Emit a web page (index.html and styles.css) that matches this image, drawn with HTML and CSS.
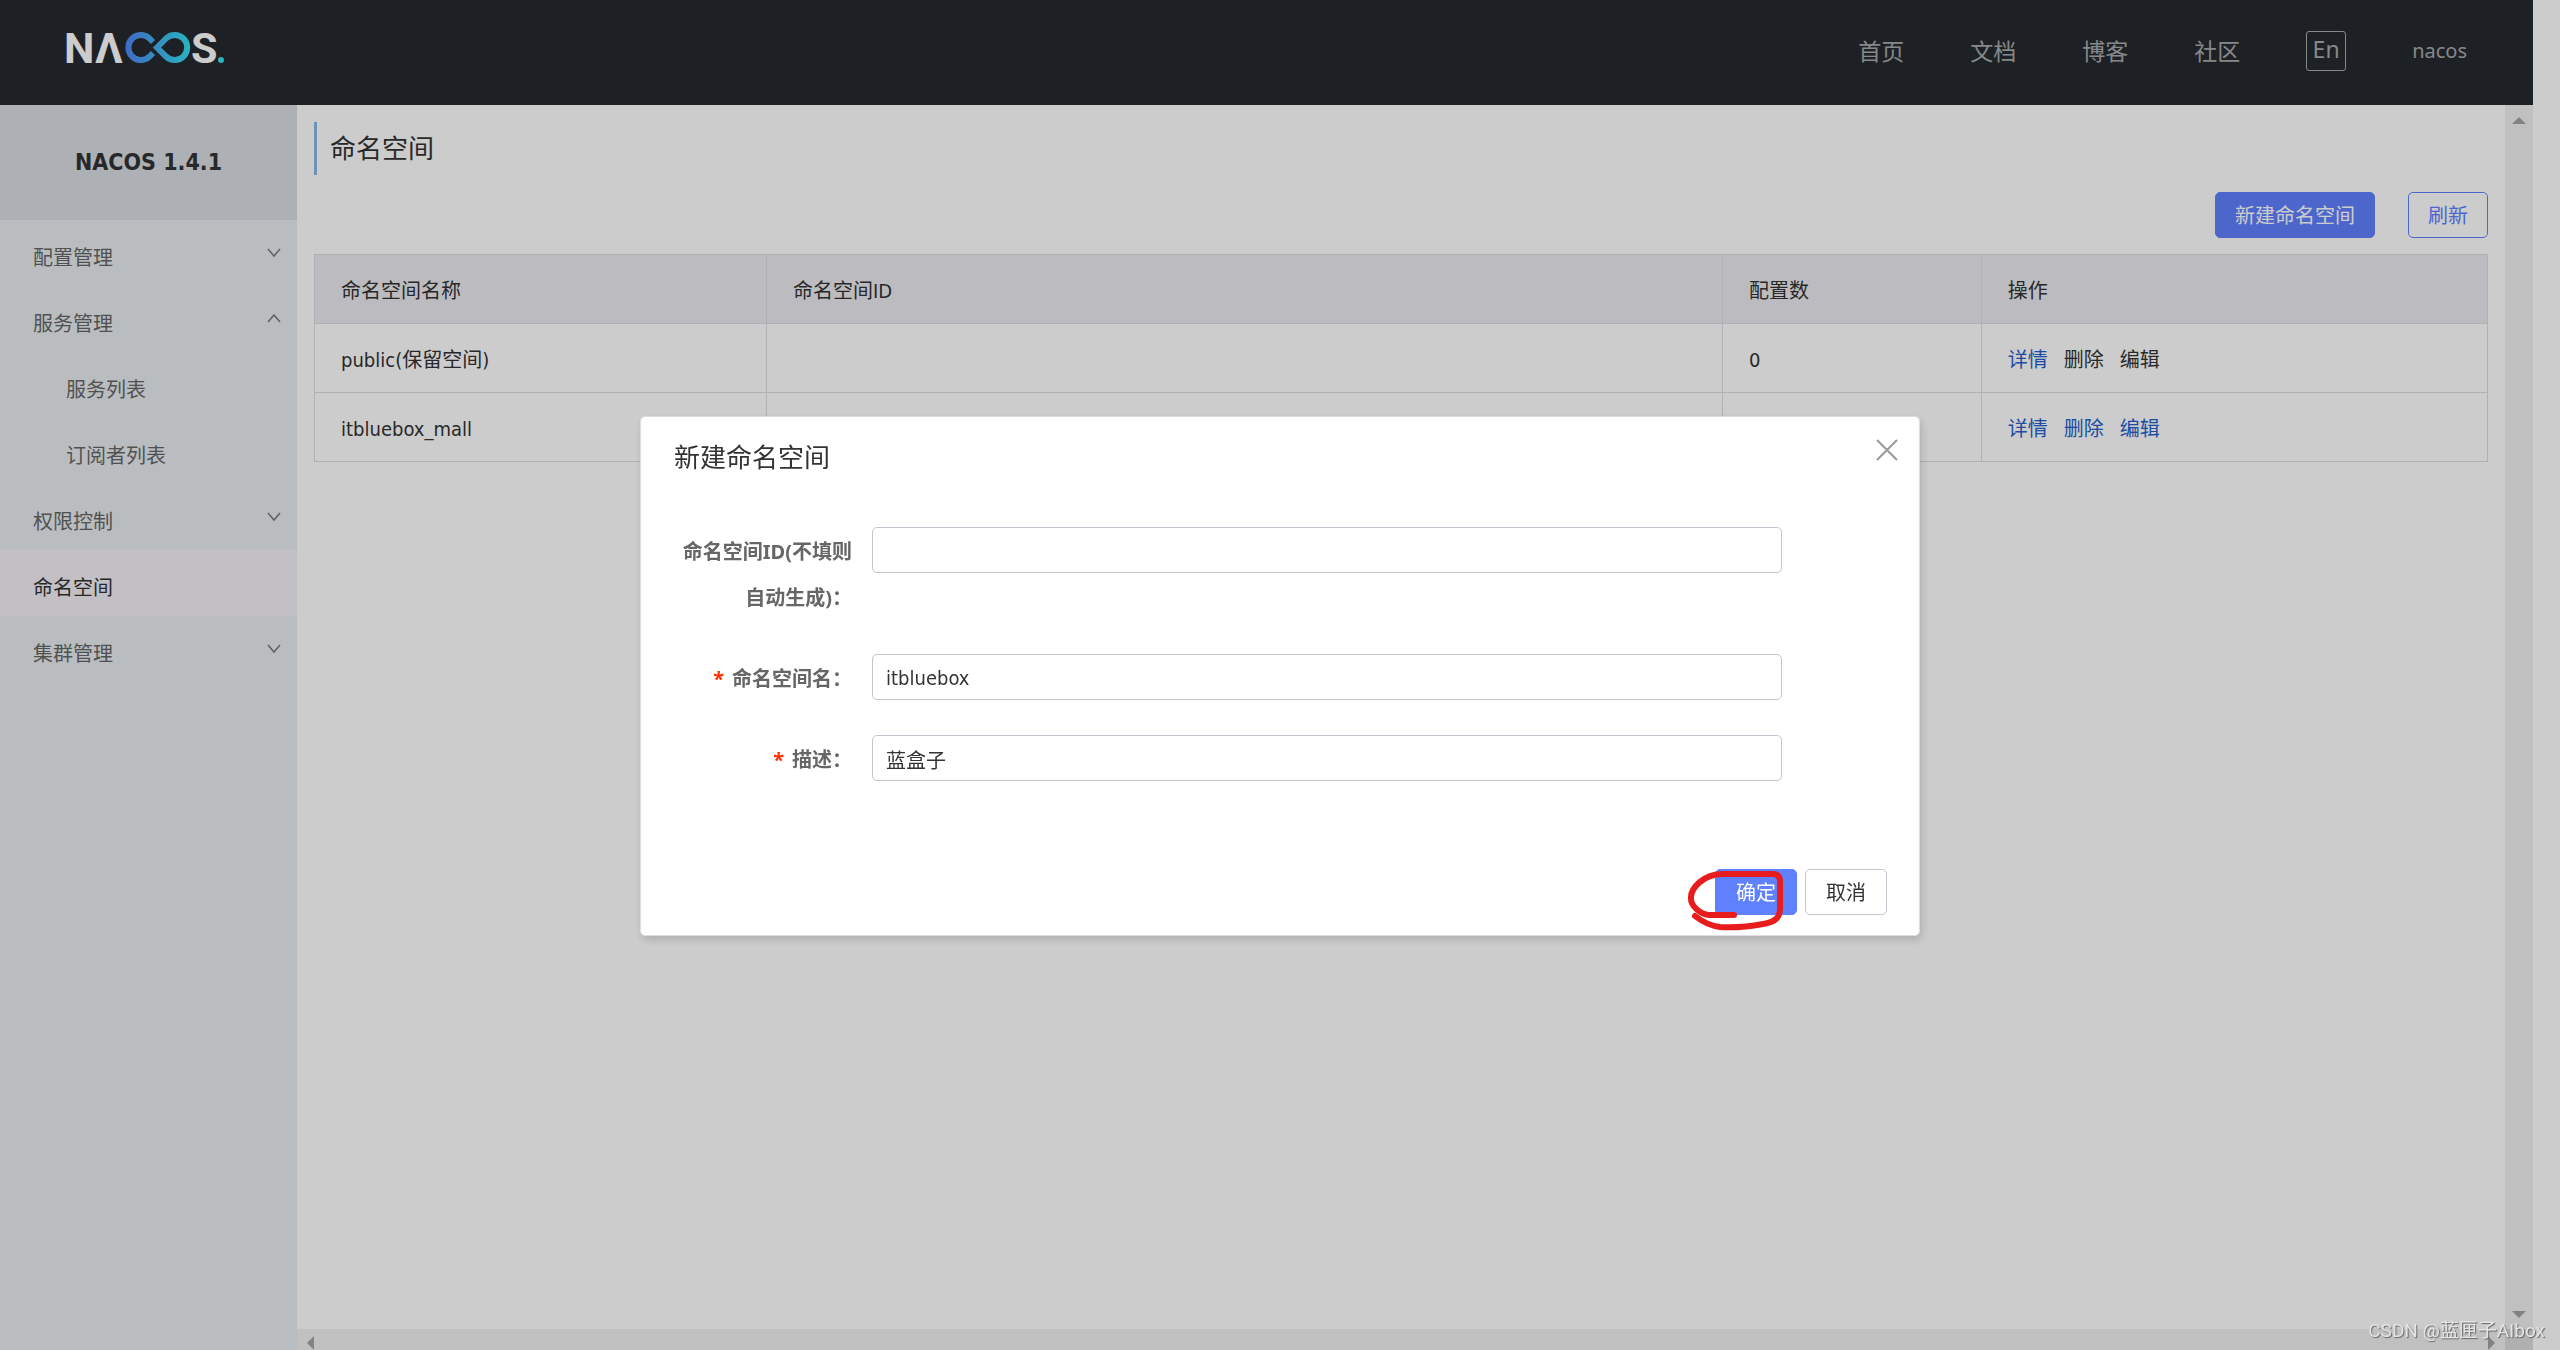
FILE: index.html
```html
<!DOCTYPE html>
<html lang="zh-CN">
<head>
<meta charset="utf-8">
<title>Nacos</title>
<link rel="stylesheet" href="styles.css">
</head>
<body>
<div class="app">
  <header class="topbar">
    <a class="logo" href="#" aria-label="Nacos">
      <svg width="170" height="68" viewBox="58 14 170 68">
        <defs>
          <linearGradient id="loop" gradientUnits="userSpaceOnUse" x1="125" y1="0" x2="190" y2="0">
            <stop offset="0" stop-color="#5085f5"/>
            <stop offset="1" stop-color="#36e0ee"/>
          </linearGradient>
        </defs>
        <text class="logo-letter" x="64" y="63">N</text>
        <text class="logo-letter" x="95" y="63">Λ</text>
        <text class="logo-letter" x="191" y="63">S</text>
        <g fill="none" stroke="url(#loop)" stroke-width="6">
          <path d="M153 42 L149 38 A12.5 12.5 0 1 0 149 57 L153 53"/>
          <path d="M157 47.5 L166 38.5 A12.5 12.5 0 1 1 166 56.5 Z"/>
        </g>
        <circle cx="221" cy="60" r="3" fill="#36e0ee"/>
      </svg>
    </a>
    <nav class="topnav">
      <a href="#">首页</a>
      <a href="#">文档</a>
      <a href="#">博客</a>
      <a href="#">社区</a>
      <button class="lang" type="button">En</button>
      <a class="user" href="#">nacos</a>
    </nav>
  </header>

  <div class="workspace">
    <aside class="sidebar">
      <h1 class="product">NACOS 1.4.1</h1>
      <ul class="menu">
        <li><a href="#">配置管理<svg class="chevron" viewBox="0 0 14 10"><path d="M1 1 L7 8 L13 1"/></svg></a></li>
        <li><a href="#">服务管理<svg class="chevron" viewBox="0 0 14 10"><path d="M1 8 L7 1 L13 8"/></svg></a>
          <ul class="menu submenu">
            <li><a href="#">服务列表</a></li>
            <li><a href="#">订阅者列表</a></li>
          </ul>
        </li>
        <li><a href="#">权限控制<svg class="chevron" viewBox="0 0 14 10"><path d="M1 1 L7 8 L13 1"/></svg></a></li>
        <li><a class="active" href="#">命名空间</a></li>
        <li><a href="#">集群管理<svg class="chevron" viewBox="0 0 14 10"><path d="M1 1 L7 8 L13 1"/></svg></a></li>
      </ul>
    </aside>

    <main class="content">
      <h2 class="page-title">命名空间</h2>
      <div class="toolbar">
        <button class="btn primary" type="button">新建命名空间</button>
        <button class="btn outline" type="button">刷新</button>
      </div>
      <table class="spaces">
        <colgroup><col class="col-name"><col class="col-id"><col class="col-count"><col class="col-action"></colgroup>
        <thead>
          <tr><th>命名空间名称</th><th>命名空间ID</th><th>配置数</th><th>操作</th></tr>
        </thead>
        <tbody>
          <tr>
            <td>public(保留空间)</td><td></td><td>0</td>
            <td><div class="actions"><a href="#">详情</a><span>删除</span><span>编辑</span></div></td>
          </tr>
          <tr>
            <td>itbluebox_mall</td><td></td><td></td>
            <td><div class="actions"><a href="#">详情</a><a href="#">删除</a><a href="#">编辑</a></div></td>
          </tr>
        </tbody>
      </table>
    </main>

    <div class="vbar">
      <svg width="14" height="7" viewBox="0 0 14 7"><path d="M7 0 L14 7 H0 Z"/></svg>
      <svg width="14" height="7" viewBox="0 0 14 7"><path d="M0 0 H14 L7 7 Z"/></svg>
    </div>
    <div class="hbar">
      <svg width="7" height="14" viewBox="0 0 7 14"><path d="M7 0 V14 L0 7 Z"/></svg>
      <svg width="7" height="14" viewBox="0 0 7 14"><path d="M0 0 L7 7 L0 14 Z"/></svg>
    </div>
    <div class="corner"></div>
  </div>
</div>

<div class="overlay">
  <section class="dialog" role="dialog" aria-labelledby="dialog-title">
    <header class="dialog-head">
      <h3 id="dialog-title">新建命名空间</h3>
      <button class="close" type="button" aria-label="关闭"><svg width="22" height="22" viewBox="0 0 22 22"><path d="M1 1 L21 21 M21 1 L1 21"/></svg></button>
    </header>
    <form class="form">
      <label for="ns-id">命名空间ID(不填则自动生成)：</label>
      <input id="ns-id" type="text">
      <label for="ns-name"><span class="required">*</span>命名空间名：</label>
      <input id="ns-name" type="text" value="itbluebox">
      <label for="ns-desc"><span class="required">*</span>描述：</label>
      <input id="ns-desc" type="text" value="蓝盒子">
    </form>
    <footer class="dialog-foot">
      <div class="confirm">
        <button class="btn primary" type="button">确定</button>
        <svg class="scribble" width="100" height="66" viewBox="1688 868 100 66"><path d="M1735 915 H1710 C1700 914 1692 905 1692 899 C1691 889 1704 873 1726 874 H1774 Q1781 874 1781 882 V908 C1781 918 1776 922 1764 924 C1748 927 1735 928 1721 927 C1712 926 1705 923 1696 916"/></svg>
      </div>
      <button class="btn" type="button">取消</button>
    </footer>
  </section>
</div>
<div class="watermark">CSDN @蓝匣子AIbox</div>
</body>
</html>
```
FILE: styles.css
```css
* { box-sizing: border-box; }

body {
  margin: 0;
  background: #fff;
  color: #333;
  font-family: "Noto Sans", "Noto Sans CJK SC", sans-serif;
  font-size: 20px;
  line-height: 30px;
}

a { color: inherit; text-decoration: none; }
button, input { font: inherit; color: inherit; }
h1, h2, h3, ul { margin: 0; padding: 0; }
ul { list-style: none; }

.app {
  display: flex;
  flex-direction: column;
  height: 100vh;
  margin-right: 27px;
}

/* top bar */
.topbar {
  display: flex;
  justify-content: space-between;
  align-items: flex-start;
  height: 105px;
  padding: 14px 66px 0 58px;
  background: #252a2f;
}
.logo svg { display: block; }
.logo-letter {
  fill: #fff;
  font-family: Roboto, sans-serif;
  font-size: 43px;
  font-weight: 700;
}
.topnav {
  display: flex;
  align-items: center;
  gap: 66px;
  padding-top: 17px;
  color: #a8aaac;
  font-size: 23px;
}
.lang {
  width: 40px;
  height: 40px;
  padding: 0 0 4px;
  border: 1px solid #a8aaac;
  border-radius: 3px;
  background: none;
  line-height: 34px;
}
.user { font-size: 20px; }

/* workspace */
.workspace {
  flex: 1;
  display: grid;
  grid-template-columns: 297px 1fr 28px;
  grid-template-rows: 1fr 21px;
  min-height: 0;
}
.sidebar {
  grid-row: 1 / 3;
  background: #e9edf1;
  color: #666;
}
.product {
  height: 115px;
  background: #d9dee4;
  color: #333;
  font-family: "DejaVu Sans Condensed", "Noto Sans", sans-serif;
  font-size: 23px;
  line-height: 115px;
  text-align: center;
}
.menu a {
  display: flex;
  justify-content: space-between;
  height: 66px;
  padding: 23px 16px 0 33px;
}
.submenu a { padding-left: 66px; }
.menu .active { background: #f4f1f7; color: #333; }
.chevron {
  width: 14px;
  height: 10px;
  margin-top: 5px;
  fill: none;
  stroke: #777;
  stroke-width: 1.5;
}

.content { padding: 17px 17px 0; }
.page-title {
  padding-left: 13px;
  border-left: 3px solid #8ab8e6;
  font-size: 26px;
  font-weight: 400;
  line-height: 53px;
}
.toolbar {
  display: flex;
  justify-content: flex-end;
  gap: 33px;
  margin: 17px 0 16px;
}
.btn {
  height: 46px;
  padding: 2px 20px 0;
  border: 1px solid #c4c6cf;
  border-radius: 5px;
  background: #fff;
  line-height: 42px;
}
.toolbar .btn { padding: 2px 19px 0; }
.btn.primary { border-color: #5f80ff; background: #5f80ff; color: #fff; }
.btn.outline { border-color: #5f80ff; color: #5f80ff; }

.spaces {
  width: 100%;
  border-collapse: collapse;
  table-layout: fixed;
  font-family: "DejaVu Sans Condensed", "Noto Sans CJK SC", sans-serif;
}
.col-name { width: 20.8%; }
.col-id { width: 44%; }
.col-count { width: 11.9%; }
.col-action { width: 23.3%; }
.spaces th, .spaces td {
  height: 69px;
  padding: 4px 26px 0;
  border: 1px solid #dcdee3;
  font-weight: 400;
  text-align: left;
}
.spaces th { background: #ebecf0; }
.actions { display: flex; gap: 16px; }
.actions a { color: #2561cc; }

.vbar, .hbar {
  display: flex;
  justify-content: space-between;
  background: #f1f1f1;
  fill: #a3a3a3;
}
.vbar {
  flex-direction: column;
  align-items: center;
  padding: 12px 0 11px;
}
.hbar {
  padding: 7px 10px 0;
  overflow: hidden;
}
.corner { background: #dcdcdc; }

/* dialog */
.overlay {
  position: fixed;
  inset: 0;
  display: flex;
  align-items: center;
  justify-content: center;
  padding-top: 2px;
  background: rgba(0, 0, 0, .2);
}
.dialog {
  width: 50%;
  border: 1px solid #dcdee3;
  border-radius: 5px;
  background: #fff;
  box-shadow: 2px 4px 8px rgba(0, 0, 0, .15);
}
.dialog-head {
  display: flex;
  justify-content: space-between;
  padding: 22px 21px 52px 33px;
}
.dialog-head h3 {
  font-size: 26px;
  font-weight: 400;
  line-height: 36px;
}
.close {
  height: 22px;
  padding: 0;
  border: 0;
  background: none;
}
.close svg {
  display: block;
  stroke: #999;
  stroke-width: 2;
}
.form {
  display: grid;
  grid-template-columns: 178px 1fr;
  gap: 33px 20px;
  align-items: start;
  padding: 0 137px 86px 33px;
}
.form label {
  padding-top: 2px;
  color: #666;
  font-weight: 700;
  line-height: 46px;
  text-align: right;
}
.form input {
  width: 100%;
  height: 46px;
  padding: 2px 13px 0;
  border: 1px solid #c4c6cf;
  border-radius: 5px;
  background: #fff;
  font-family: "DejaVu Sans Condensed", "Noto Sans CJK SC", sans-serif;
}
.required { margin-right: 8px; color: #ff3000; }
.dialog-foot {
  display: flex;
  justify-content: flex-end;
  gap: 8px;
  padding: 0 32px 20px;
}
.confirm { position: relative; }
.scribble {
  position: absolute;
  left: -28px;
  top: -1px;
  fill: none;
  stroke: #e81c1c;
  stroke-width: 6;
  stroke-linecap: round;
  pointer-events: none;
}

.watermark {
  position: fixed;
  right: 15px;
  bottom: 4px;
  color: #e4e4e4;
  font-family: Roboto, "Noto Sans CJK SC", sans-serif;
  font-size: 19px;
  text-shadow: 1px 1px 1px #666;
}
```
